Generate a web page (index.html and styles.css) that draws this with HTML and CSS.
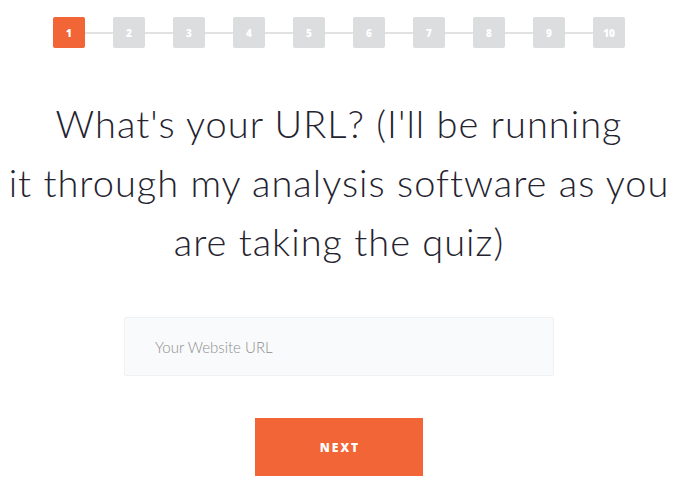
FILE: index.html
```html
<!DOCTYPE html>
<html>
<head>
<meta charset="utf-8">
<link rel="stylesheet" href="styles.css">
</head>
<body>
<div class="page">
  <div class="steps">
    <div class="step active">1</div><div class="line"></div>
    <div class="step">2</div><div class="line"></div>
    <div class="step">3</div><div class="line"></div>
    <div class="step">4</div><div class="line"></div>
    <div class="step">5</div><div class="line"></div>
    <div class="step">6</div><div class="line"></div>
    <div class="step">7</div><div class="line"></div>
    <div class="step">8</div><div class="line"></div>
    <div class="step">9</div><div class="line"></div>
    <div class="step">10</div>
  </div>
  <h1 class="question">What's your URL? (I'll be running<br>it through my analysis software as you<br>are taking the quiz)</h1>
  <input class="url" type="text" placeholder="Your Website URL">
  <button class="next">NEXT</button>
</div>
</body>
</html>
```
FILE: styles.css
```css
html, body {
  margin: 0;
  padding: 0;
  background: #fff;
}
.page {
  width: 678px;
  display: flex;
  flex-direction: column;
  align-items: center;
  font-family: Lato, "Open Sans", sans-serif;
}
.steps {
  display: flex;
  align-items: center;
  margin-top: 17px;
}
.step {
  width: 32px;
  height: 31px;
  border-radius: 2px;
  background: #dcdddf;
  color: #fff;
  font-family: "Open Sans", sans-serif;
  font-weight: 800;
  font-size: 10px;
  display: flex;
  align-items: center;
  justify-content: center;
}
.step.active {
  background: #f26536;
}
.line {
  width: 28px;
  height: 2px;
  background: #e2e2e2;
}
.question {
  margin: 46px 0 0;
  font-weight: 300;
  font-size: 38px;
  letter-spacing: 1px;
  line-height: 59px;
  color: #24232f;
  text-align: center;
  white-space: nowrap;
}
.url {
  margin-top: 46px;
  box-sizing: border-box;
  width: 430px;
  height: 59px;
  border: 1px solid #f0f1f3;
  border-radius: 2px;
  background: #f9fafb;
  padding: 0 0 0 30px;
  font-family: Lato, sans-serif;
  font-weight: 300;
  font-size: 15px;
  color: #333;
  outline: none;
}
.url::placeholder {
  color: #8f8f8f;
}
.next {
  margin-top: 42px;
  width: 168px;
  height: 58px;
  border: none;
  border-radius: 0;
  background: #f26536;
  color: #fff;
  font-family: "Open Sans", sans-serif;
  font-weight: 800;
  font-size: 12px;
  letter-spacing: 2px;
  padding: 0 0 0 2px;
}
```
